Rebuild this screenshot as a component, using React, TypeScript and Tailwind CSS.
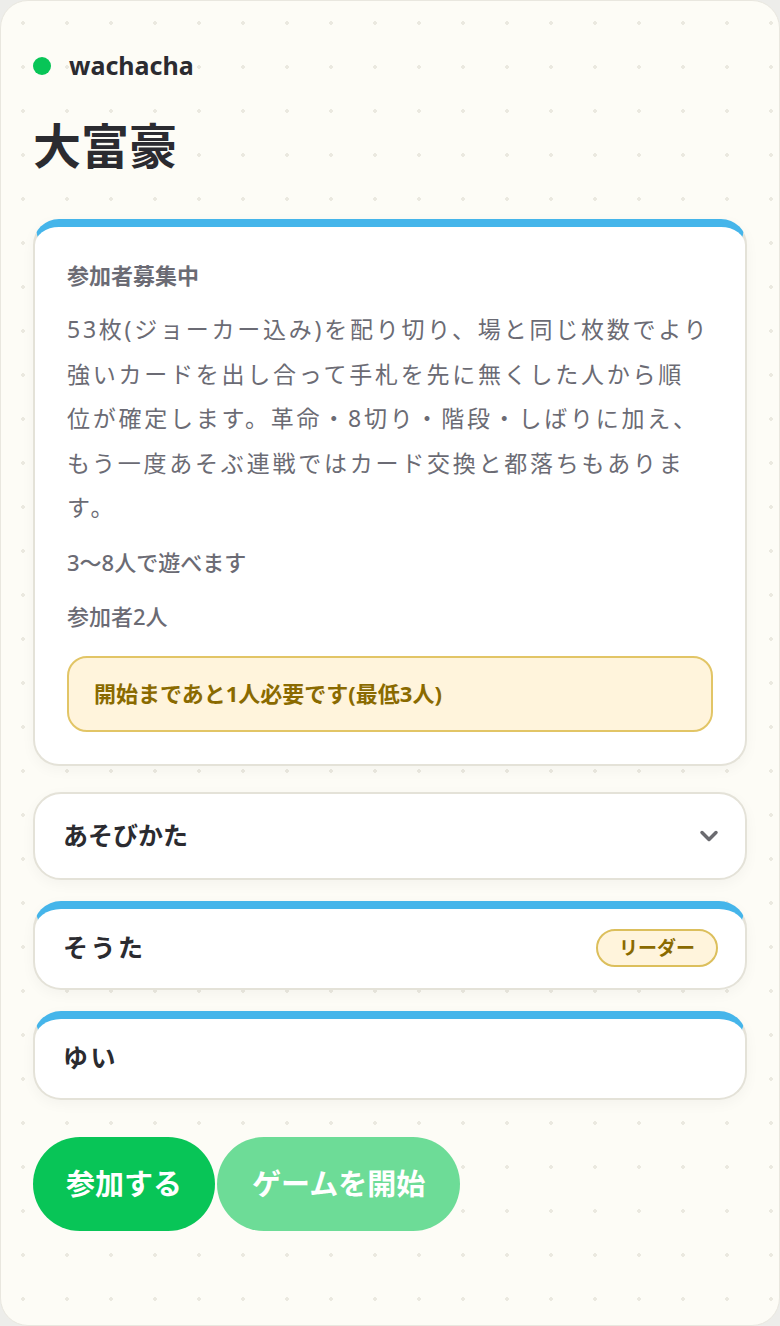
import { ChevronDown } from 'lucide-react';

const jp = "font-['Noto_Sans','Noto_Sans_CJK_JP',sans-serif]";

const players = [
  { name: 'そうた', leader: true },
  { name: 'ゆい', leader: false },
];

function App() {
  return (
    <div className={`min-h-screen bg-[#ededea] ${jp}`}>
      <div className="min-h-[1326px] rounded-[28px] border border-[#e9e7df] bg-[#fdfcf6] bg-[radial-gradient(circle,#ebe9e0_1.6px,transparent_1.8px)] bg-[size:44px_44px] px-[32px] pt-[52px] pb-10">
        {/* Header */}
        <div className="flex items-center gap-[18px]">
          <span className="h-[18px] w-[18px] rounded-full bg-[#08c557]" />
          <span className="text-[25px] font-bold leading-none text-[#2b2b30]">wachacha</span>
        </div>
        <h1 className="mt-[44px] text-[48px] font-bold leading-none text-[#2b2b30]">大富豪</h1>

        {/* Info card */}
        <div className="mt-[49px] rounded-[26px] border-2 border-t-8 border-[#e4e2d8] border-t-[#45b5ea] bg-white px-[32px] pt-[37px] pb-[32px] shadow-[0_4px_14px_rgba(0,0,0,0.04)]">
          <p className="text-[22px] font-bold leading-none text-[#6b6b74]">参加者募集中</p>
          <p className="mt-[21px] whitespace-pre-line text-[23px] leading-[44.5px] tracking-[0.12em] text-[#6b6b74]">
            {'53枚(ジョーカー込み)を配り切り、場と同じ枚数でより\n強いカードを出し合って手札を先に無くした人から順\n位が確定します。革命・8切り・階段・しばりに加え、\nもう一度あそぶ連戦ではカード交換と都落ちもありま\nす。'}
          </p>
          <p className="mt-[16px] text-[22px] font-medium leading-[32px] text-[#6b6b74]">3〜8人で遊べます</p>
          <p className="mt-[22px] text-[22px] font-medium leading-[32px] text-[#6b6b74]">参加者2人</p>
          <div className="mt-[24px] flex h-[76px] items-center rounded-[20px] border-2 border-[#e2c566] bg-[#fff4dc] px-[25px]">
            <span className="text-[22px] font-bold text-[#8a6a00]">開始まであと1人必要です(最低3人)</span>
          </div>
        </div>

        {/* How to play */}
        <div className="mt-[26px] flex h-[88px] items-center justify-between rounded-[28px] border-2 border-[#e4e2d8] bg-white pl-[28px] pr-[22px] shadow-[0_4px_14px_rgba(0,0,0,0.04)]">
          <span className="text-[25px] font-bold text-[#2b2b30]">あそびかた</span>
          <ChevronDown size={28} strokeWidth={3} className="text-[#6b6b70]" />
        </div>

        {/* Players */}
        <div className="mt-[21px] flex flex-col gap-[21px]">
          {players.map((p) => (
            <div
              key={p.name}
              className="flex h-[89px] items-center justify-between rounded-[28px] border-2 border-t-8 border-[#e4e2d8] border-t-[#45b5ea] bg-white pl-[28px] pr-[27px] shadow-[0_4px_14px_rgba(0,0,0,0.04)]"
            >
              <span className="text-[25px] font-bold tracking-[0.1em] text-[#2b2b30]">{p.name}</span>
              {p.leader && (
                <span className="flex h-[38px] items-center rounded-full border-2 border-[#dcbf5c] bg-[#fff4dc] px-[21px] text-[19px] font-bold text-[#8a6a00]">
                  リーダー
                </span>
              )}
            </div>
          ))}
        </div>

        {/* Actions */}
        <div className="mt-[37px] flex gap-[2px]">
          <button className="h-[94px] rounded-full bg-[#08c557] px-[33px] text-[29px] font-bold text-white">参加する</button>
          <button disabled className="h-[94px] rounded-full bg-[#6ddc97] px-[35px] text-[29px] font-bold text-white">ゲームを開始</button>
        </div>
      </div>
    </div>
  );
}

export default App;
